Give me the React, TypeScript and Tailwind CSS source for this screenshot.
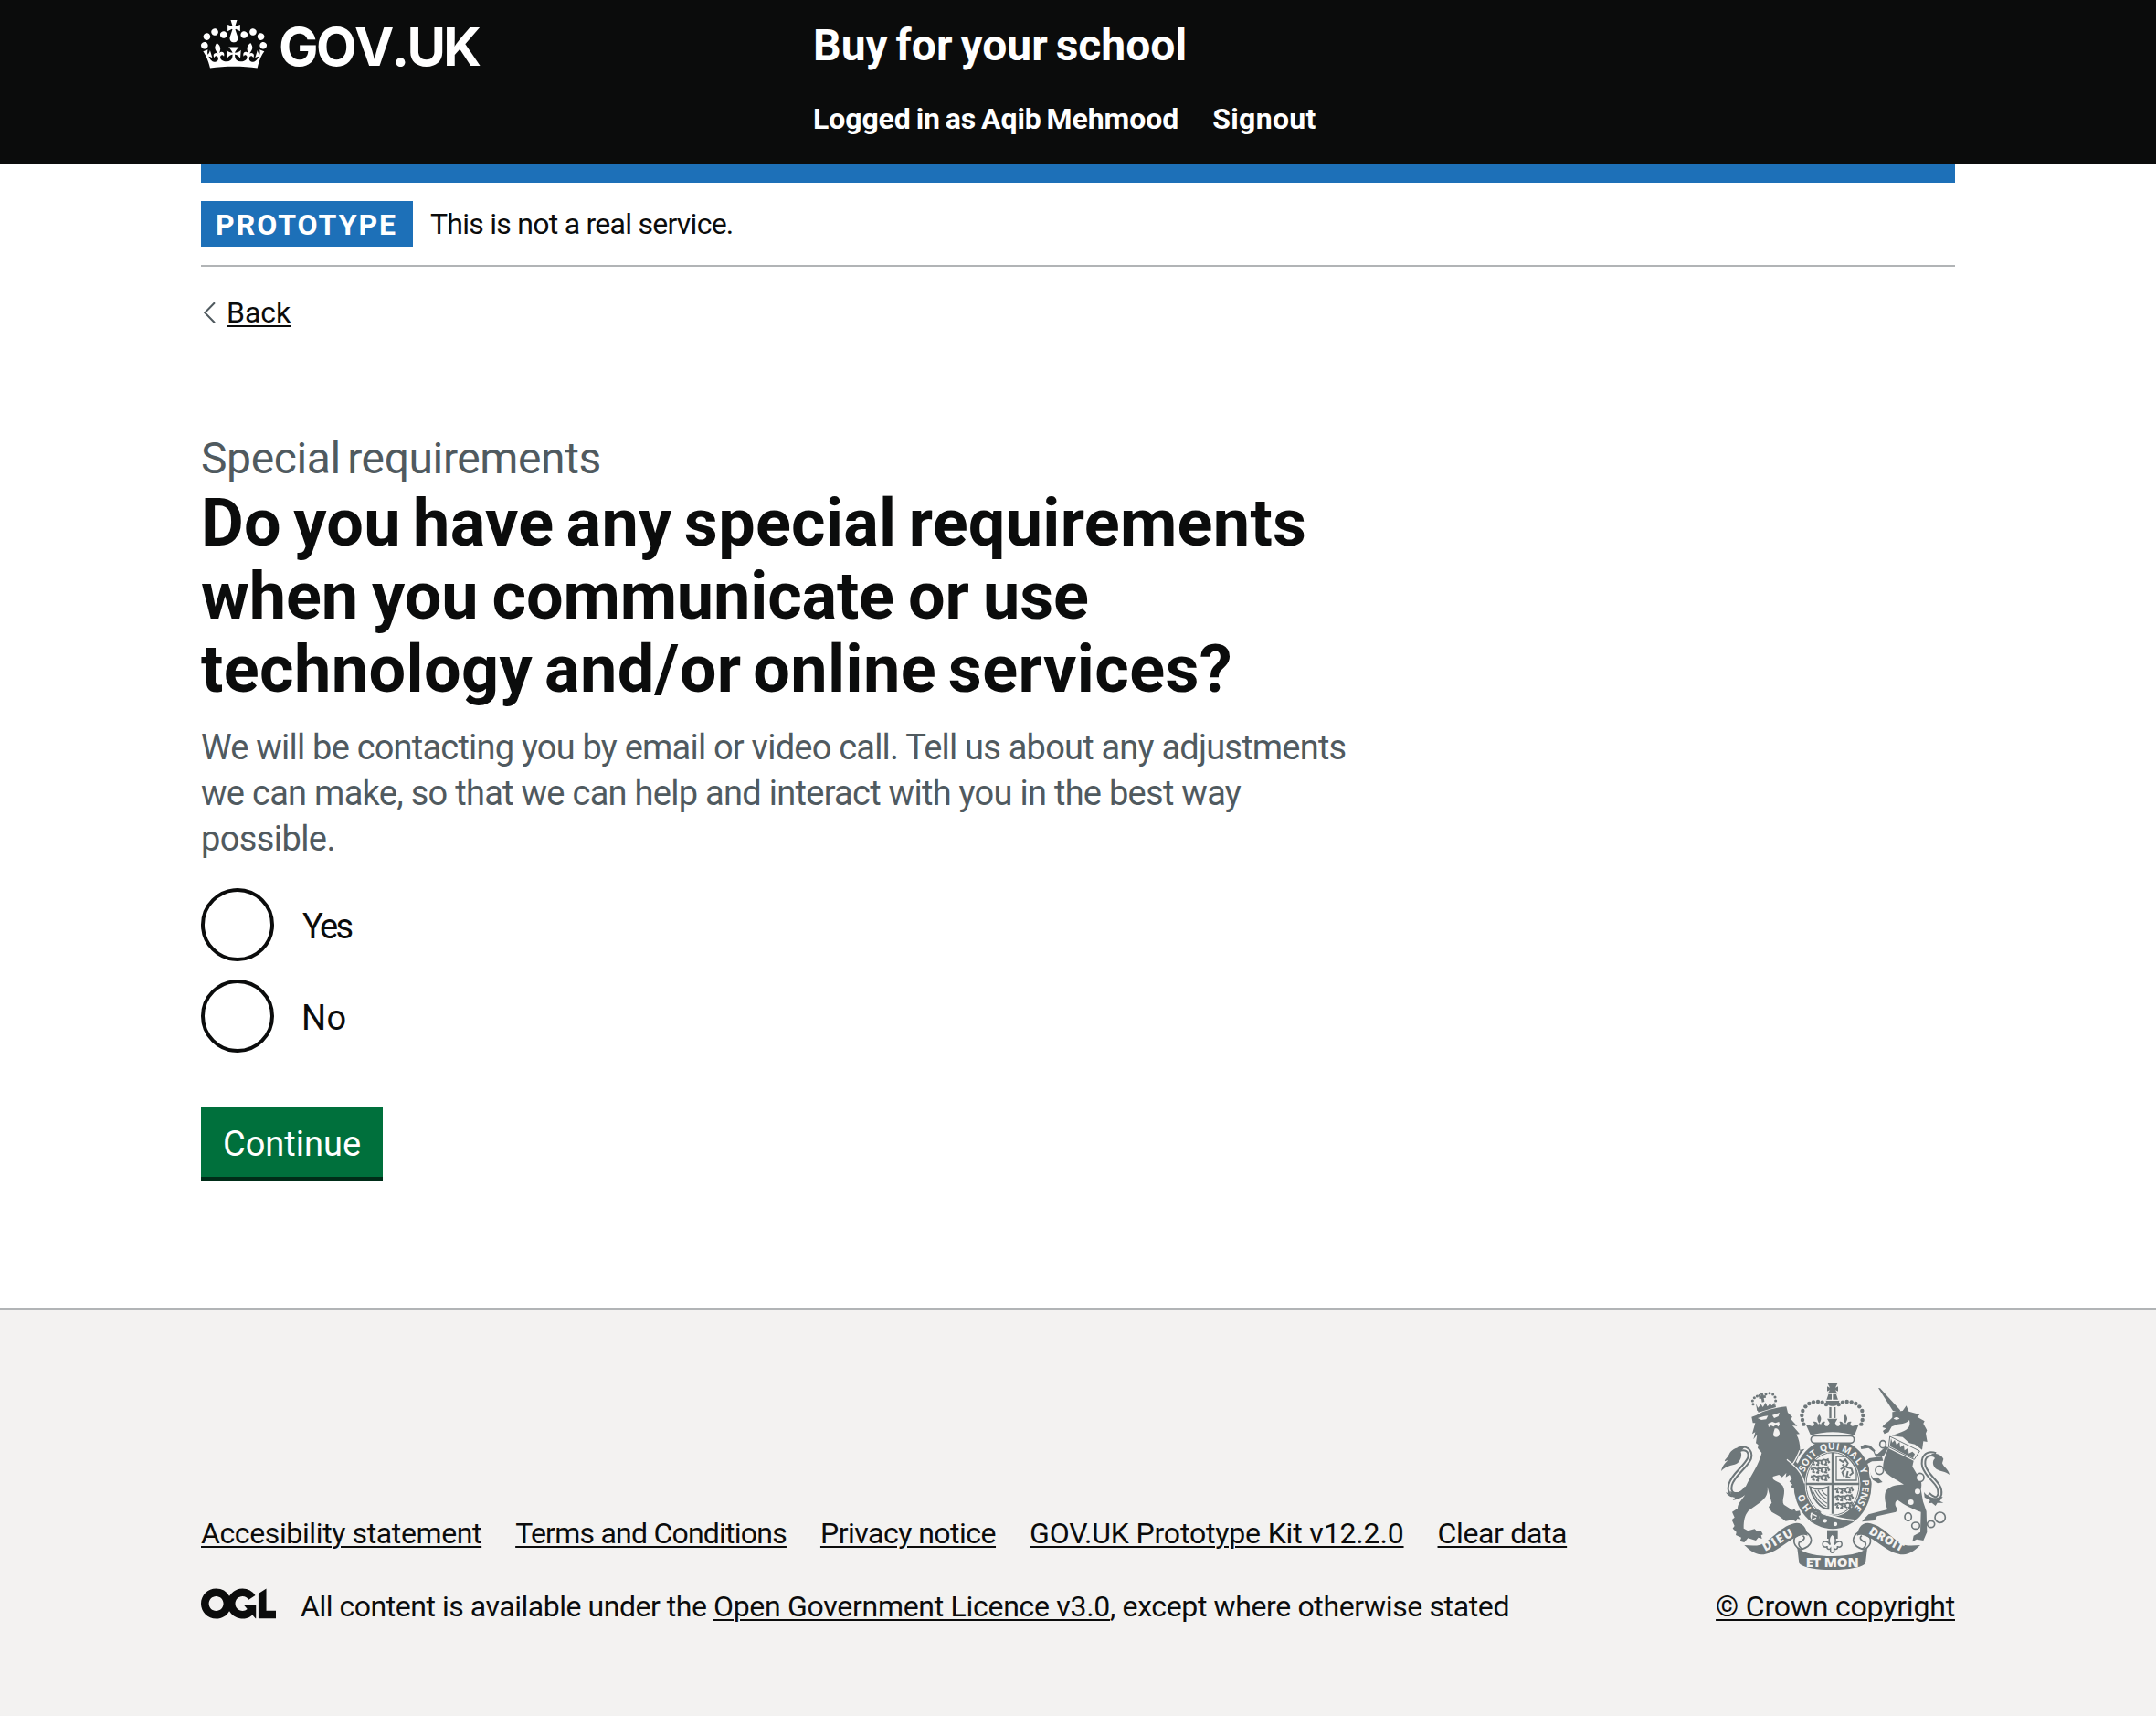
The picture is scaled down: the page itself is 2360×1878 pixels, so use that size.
import type { ReactNode } from "react";

const INK = "#6e777a";
const PAPER = "#f3f2f1";

function CrownLogo() {
  return (
    <svg viewBox="0 0 132 97" className="mt-[1.5px] h-[53px] w-[72px] shrink-0" fill="currentColor" aria-hidden="true">
      <path
        fillRule="evenodd"
        d="M25 30.2c3.5 1.5 7.7-.2 9.1-3.7 1.5-3.6-.2-7.8-3.9-9.2-3.6-1.4-7.6.3-9.1 3.9-1.4 3.5.3 7.5 3.9 9zM9 39.5c3.6 1.5 7.8-.2 9.2-3.7 1.5-3.6-.2-7.8-3.9-9.1-3.6-1.5-7.6.2-9.1 3.8-1.4 3.5.3 7.5 3.8 9zM4.4 57.2c3.5 1.5 7.7-.2 9.1-3.8 1.5-3.6-.2-7.7-3.9-9.1-3.5-1.5-7.6.3-9.1 3.8-1.4 3.5.3 7.6 3.9 9.1zm38.3-21.4c3.5 1.5 7.7-.2 9.1-3.8 1.5-3.6-.2-7.7-3.9-9.1-3.6-1.5-7.6.3-9.1 3.8-1.3 3.6.4 7.7 3.9 9.1zm64.4-5.6c-3.6 1.5-7.8-.2-9.1-3.7-1.5-3.6.2-7.8 3.8-9.2 3.6-1.4 7.7.3 9.2 3.9 1.3 3.5-.4 7.5-3.9 9zm15.9 9.3c-3.6 1.5-7.7-.2-9.1-3.7-1.5-3.6.2-7.8 3.7-9.1 3.6-1.5 7.7.2 9.2 3.8 1.5 3.5-.3 7.5-3.8 9zm4.7 17.7c-3.6 1.5-7.8-.2-9.2-3.8-1.5-3.6.2-7.7 3.9-9.1 3.6-1.5 7.7.3 9.2 3.8 1.3 3.5-.4 7.6-3.9 9.1zM89.3 35.8c-3.6 1.5-7.8-.2-9.2-3.8-1.4-3.6.2-7.7 3.9-9.1 3.6-1.5 7.7.3 9.2 3.8 1.4 3.6-.3 7.7-3.9 9.1zM69.7 17.7l8.9 4.7V9.3l-8.9 2.8c-.2-.3-.5-.6-.9-.9L72.4 0H59.6l3.5 11.2c-.3.3-.6.5-.9.9l-8.8-2.8v13.1l8.8-4.7c.3.3.6.7.9.9l-5 15.4v.1c-.2.8-.4 1.6-.4 2.4 0 4.1 3.1 7.5 7 8.1h.2c.3 0 .7.1 1 .1.4 0 .7 0 1-.1h.2c4-.6 7.1-4.1 7.1-8.1 0-.8-.1-1.7-.4-2.4V34l-5.1-15.4c.4-.2.7-.6 1-.9zM66 92.8c16.9 0 32.8 1.1 47.1 3.2 4-16.9 8.9-26.7 14-33.5l-9.6-3.4c1 4.9 1.1 7.2 0 10.2-1.5-1.4-3-4.3-4.2-8.7L108.6 76c2.8-2 5-3.2 7.5-3.3-4.4 9.4-10 11.9-13.6 11.2-4.3-.8-6.3-4.6-5.6-7.9 1-4.7 5.7-5.9 8-.5 4.3-8.7-3-11.4-7.6-8.8 7.1-7.2 7.9-13.5 2.1-21.1-8 6.1-8.1 12.3-4.5 20.8-4.7-5.4-12.1-2.5-9.5 6.2 3.4-5.2 7.9-2 7.2 3.1-.6 4.3-6.4 7.8-13.5 7.2-10.3-.9-10.9-8-11.2-13.8 2.5-.5 7.1 1.8 11 7.3L80.2 60c-4.1 4.4-8 5.3-12.3 5.4 1.4-4.4 8-11.6 8-11.6H55.5s6.4 7.2 7.9 11.6c-4.2-.1-8-1-12.3-5.4l1.4 16.4c3.9-5.5 8.5-7.7 10.9-7.3-.3 5.8-.9 12.8-11.1 13.8-7.2.6-12.9-2.9-13.5-7.2-.7-5 3.8-8.3 7.1-3.1 2.7-8.7-4.6-11.6-9.4-6.2 3.7-8.5 3.6-14.7-4.6-20.8-5.8 7.6-5 13.9 2.2 21.1-4.7-2.6-11.9.1-7.7 8.8 2.3-5.5 7.1-4.2 8.1.5.7 3.3-1.3 7.1-5.7 7.9-3.5.7-9-1.8-13.5-11.2 2.5.1 4.7 1.3 7.5 3.3l-4.7-15.4c-1.2 4.4-2.7 7.2-4.3 8.7-1.1-3-.9-5.3 0-10.2l-9.5 3.4c5 6.9 9.9 16.7 14 33.5 14.8-2.1 30.8-3.2 47.7-3.2z"
      />
    </svg>
  );
}

function OglLogo() {
  return (
    <svg viewBox="0 0 483.2 195.7" className="h-[34px] w-[82px] shrink-0 self-start" fill="currentColor" aria-hidden="true">
      <path d="M421.5 142.8V.1l-50.7 32.3v161.1h112.4v-50.7zm-122.3-9.6A47.12 47.12 0 0 1 221 97.8c0-26 21.1-47.1 47.1-47.1 16.7 0 31.4 8.7 39.7 21.8l42.7-27.2A97.63 97.63 0 0 0 268.1 0c-36.5 0-68.3 20.1-85.1 49.7A98 98 0 0 0 97.8 0C43.9 0 0 43.9 0 97.8s43.9 97.8 97.8 97.8c36.5 0 68.3-20.1 85.1-49.7a97.76 97.76 0 0 0 149.6 25.4l19.4 22.2h3v-87.8h-80l24.3 27.5zM97.8 145c-26 0-47.1-21.1-47.1-47.1s21.1-47.1 47.1-47.1 47.1 21.1 47.1 47.1S123.8 145 97.8 145" />
    </svg>
  );
}

/* Garter motto: each letter with its clock angle on the belt. */
const MOTTO: [string, number][] = [
  ["H", -129], ["O", -112],
  ["S", -66], ["O", -55], ["I", -45], ["T", -36],
  ["Q", -16], ["U", -2], ["I", 9],
  ["M", 25], ["A", 40], ["L", 53],
  ["Y", 69],
  ["P", 88], ["E", 98.5], ["N", 109], ["S", 120], ["E", 130],
];

const ARCH: [number, number][] = [
  [343, 206], [339, 192], [337, 177], [340, 162], [349, 148], [361, 138], [375, 133], [390, 132], [404, 134], [417, 141],
];

const LION_CROWN: [number, number][] = [
  [177, 140], [175, 129], [181, 119], [190, 114], [219, 107], [231, 104], [242, 108], [249, 117], [251, 129], [198, 112],
];

const PASSANT = "M0 5l8-4 6 4 8-2 9 1 7-4 8 2 8-4M6 6l-3 9 7 1M18 6l4 5-6 6 7 1M32 6l-2 6 8 5M44 5l3 5-5 6 8 1M50 2l6 6-4 3M0 1l-2 8";

function PassantLions({ x, y, s }: { x: number; y: number; s: number }) {
  return (
    <g transform={`translate(${x} ${y}) scale(${s})`} fill="none" stroke={INK} strokeWidth={5.5} strokeLinejoin="round">
      <path d={PASSANT} />
      <path d={PASSANT} transform="translate(0 25)" />
      <path d={PASSANT} transform="translate(0 50)" />
    </g>
  );
}

function RoyalArms() {
  return (
    <svg viewBox="72 72 750 612" className="h-[204px] w-[250px]" aria-hidden="true">
      <g fill={INK}>
        {/* lion tail */}
        <path d="M158 425C115 450 95 435 102 405C112 370 150 350 165 318C172 290 150 280 128 290" fill="none" stroke={INK} strokeWidth={17} />
        <path d="M158 425C115 450 95 435 102 405C112 370 150 350 165 318C172 290 150 280 128 290" fill="none" stroke={PAPER} strokeWidth={5} />
        <path d="M148 282C125 278 105 290 98 305C92 318 82 322 84 328L94 324C86 334 76 340 72 360C88 342 108 342 122 336C136 328 142 306 136 296Z" />
        <path d="M150 410C135 432 115 436 98 424L106 436L87 430C98 446 108 446 118 446L110 456C136 452 152 440 168 420Z" />
        {/* lion crown */}
        <path d="M190 156L250 141L252 150L194 167Z" />
        <path d="M186 138l7 14 10-12 6 10 9-15 6 13 8-9 7 6 9-12-3 14-55 15z" />
        <path d="M200 101l9 3 3 8 6-1 1 8-7 1 2 12-8 2-2-12-7 1-1-8 7-1z" />
        {LION_CROWN.map(([x, y]) => (
          <circle key={`${x}-${y}`} cx={x} cy={y} r={4.6} />
        ))}
        {/* lion body */}
        <path d="M172 182L188 176C215 160 250 152 286 148L291 168L306 182L300 188L322 212L306 210L330 238L319 239C328 255 331 272 331 290L346 287L326 312L318 330C340 350 348 375 342 400L352 424L340 420L336 432L326 422L318 430L312 416L300 412L306 404L296 394L304 386L297 372L284 380L286 366L272 380L262 372L242 378C236 392 262 392 274 408C288 430 268 455 278 470L306 488L312 484L318 492L330 490L333 504L326 508L332 518L322 516L318 526L306 520L284 524L262 508L238 494L228 478L238 464L224 412C228 440 212 454 198 464L162 490C150 505 146 520 146 548L160 556L182 550L190 558L204 558L209 568L203 571L206 582L194 578L186 588L160 580L148 594L134 590L138 578L120 570L122 560L110 548L116 540L107 520L116 512L108 494L126 482C128 455 166 438 152 412C170 372 196 340 205 300L192 284L194 274L186 268L190 240L178 256L184 232L174 238L184 202L176 202Z" />
        <path d="M192 186l20-6 14-2-6 12-16 2zM240 176l24-8-4 12-14 6zM226 204l14-6 10 4 12-4 2 8-4 8-8-6-8 6-8-4-8 6zM248 220c8-2 16 4 16 16 0 8-6 12-12 12-8 0-10-6-8-14z" fill={PAPER} />

        {/* unicorn tail */}
        <path d="M776 306C745 296 732 318 738 345C752 385 795 400 790 436C784 458 768 452 752 436" fill="none" stroke={INK} strokeWidth={17} />
        <path d="M776 306C745 296 732 318 738 345C752 385 795 400 790 436C784 458 768 452 752 436" fill="none" stroke={PAPER} strokeWidth={5} />
        <path d="M762 304C778 300 796 306 802 320L798 334C804 350 818 352 822 372C808 360 792 362 780 354C766 346 764 326 774 318Z" />
        <path d="M738 428C745 440 768 452 784 446L800 444L790 458L802 464L782 464L776 474L764 464L752 466L758 456L740 446Z" />
        {/* unicorn */}
        <path d="M588 87L594 88L660 160L658 168L636 162Z" />
        <path d="M634 166L668 162L680 145L688 164L724 174L716 182L740 196L736 204L748 226L744 236L749 264L736 262L732 290L708 272L690 268L668 248L632 244L664 232C690 222 694 210 690 192C680 204 668 204 652 206L632 214L622 232L608 238L603 228L614 220L602 216C602 208 626 196 634 184Z" />
        <path d="M638 188c6-8 16-6 20 0l-10 4z" fill={PAPER} />
        <path d="M626 246L724 294L706 322L622 280Z" fill={PAPER} stroke={INK} strokeWidth={3} />
        <path d="M630 252l4 14 8-8 6 16 10-10 2 18 12-8 2 18 12-8 2 18 12-6 8 8-6 14-76-40z" />
        <path d="M622 286L704 326L700 345L716 372C728 385 733 400 728 420L735 460L746 492L748 560L736 588L714 584L700 592L704 572L726 560L728 494C700 484 672 470 652 455C640 460 642 476 652 484L646 494L584 508L576 522L534 526L546 512L556 502L618 486C610 462 606 440 614 424C630 405 655 404 672 404C650 388 606 372 604 345C604 325 614 305 622 280Z" />
        <path d="M622 282L606 310L580 314L572 296L556 284L532 288L530 280L544 272L562 276L576 290L590 300L612 280Z" />
        <path d="M604 326L568 328L548 338L560 366L572 384L586 380L602 396L588 400L568 388L546 366L534 336L558 318L600 312Z" />
        <g fill={PAPER} stroke={INK} strokeWidth={5}>
          <ellipse cx={603} cy={272} rx={10} ry={12} />
          <ellipse cx={592} cy={357} rx={13} ry={14} />
          <ellipse cx={725} cy={381} rx={13} ry={14} />
          <ellipse cx={686} cy={510} rx={11} ry={13} />
          <ellipse cx={711} cy={539} rx={13} ry={11} />
          <ellipse cx={761} cy={534} rx={12} ry={11} />
          <circle cx={791} cy={512} r={17} />
        </g>
        <g fill={PAPER}>
          <circle cx={717} cy={427} r={9} />
          <circle cx={695} cy={462} r={9} />
          <circle cx={583} cy={297} r={7} />
        </g>

        {/* imperial crown */}
        <path d="M422 72h32l-7 14 9-4v16l-9-4 7 12h-32l7-12-9 4v-16l9 4z" />
        <path d="M424 108h26l6 18h-38zM416 128h44c0 12-10 18-22 18s-22-6-22-18z" />
        <path d="M437 104v24M418 127h40" stroke={PAPER} strokeWidth={4} />
        <path d="M427 150h7v36h-7zM441 150h7v36h-7z" />
        {ARCH.map(([x, y]) => (
          <g key={`${x}-${y}`}>
            <circle cx={x} cy={y} r={6.6} />
            <circle cx={875 - x} cy={y} r={6.6} />
          </g>
        ))}
        <path d="M350 206l20 6c8 0 10-8 4-14 8-2 14 2 16 8l4-2c-6-12-10-18 0-30 10 12 6 20 0 30l6 2c2-8 8-10 14-8-6 6-2 16 8 14l6-10-8-14h34l-8 14 6 10c10 2 14-8 8-14 6-2 12 0 14 8l6-2c-6-10-10-18 0-30 10 12 6 18 0 30l4 2c2-6 8-10 16-8-6 6-4 14 4 14l20-6-14 36c-46-14-98-14-144 0z" />

        {/* garter */}
        <ellipse cx={438} cy={402} rx={128} ry={148} />
        <ellipse cx={438} cy={402} rx={91} ry={107} fill={PAPER} />
        <ellipse cx={438} cy={402} rx={87} ry={103} fill="none" stroke={INK} strokeWidth={3} />
        <rect x={367} y={244} width={142} height={24} rx={12} fill={PAPER} stroke={INK} strokeWidth={5} />
        <path d="M351 402H525M438 300V500" stroke={INK} strokeWidth={7} />
        <PassantLions x={370} y={322} s={1.02} />
        <PassantLions x={449} y={414} s={1.0} />
        <path d="M450 312h32c16 10 28 26 34 46v32h-66z" fill="none" stroke={INK} strokeWidth={4} />
        <path d="M460 322l12 8 8-8 8 12-6 12 18 6 4 14-10 8M470 338l8 8-14 8M480 352l-10 12 6 14M488 360l-4 18 12 4" fill="none" stroke={INK} strokeWidth={6} />
        <path d="M364 412C382 420 404 420 424 412V484C400 484 372 452 364 412Z" fill="none" stroke={INK} strokeWidth={6} />
        <path d="M380 422C390 440 402 456 420 466M390 422C396 434 408 446 420 452M402 422C406 430 412 436 420 440M372 424C384 452 396 466 418 476" fill="none" stroke={INK} strokeWidth={3.5} />
        <path d="M400 494C430 508 470 518 508 522" fill="none" stroke={PAPER} strokeWidth={6} />
        <circle cx={380} cy={508} r={19} fill={PAPER} stroke={INK} strokeWidth={7} />
        <path d="M372 490l26 8-8 34-22-6z" />
        <path d="M366 498l20 10M366 522l18-8" stroke={PAPER} strokeWidth={4} />
        <circle cx={413} cy={523} r={6.5} fill={PAPER} />
        <circle cx={447} cy={534} r={6.5} fill={PAPER} />
        <path d="M288 322C310 340 336 360 346 400M330 292C318 320 312 335 304 338" fill="none" stroke={PAPER} strokeWidth={4} />
        <path d="M566 330C556 352 560 380 568 392" fill="none" stroke={PAPER} strokeWidth={5} />
        {MOTTO.map(([letter, angle], i) => {
          const t = (angle * Math.PI) / 180;
          const x = 438 + 109 * Math.sin(t);
          const y = 402 - 124 * Math.cos(t);
          return (
            <text
              key={i}
              transform={`translate(${x.toFixed(1)} ${y.toFixed(1)}) rotate(${angle})`}
              y={11}
              textAnchor="middle"
              fill={PAPER}
              fontFamily="Open Sans"
              fontWeight={700}
              fontSize={31}
            >
              {letter}
            </text>
          );
        })}

        {/* fleur below the garter */}
        <path d="M420 554h35v28h-35z" />
        <path d="M437 566C424 578 424 590 430 602C420 586 402 588 406 604C410 612 420 610 420 606C418 618 428 618 431 614V622A6 6 0 1 0 443 622V614C446 618 456 618 454 606C454 610 464 612 468 604C472 588 454 586 444 602C450 590 450 578 437 566Z" fill={PAPER} stroke={INK} strokeWidth={4.5} />

        {/* motto scroll */}
        {[false, true].map((flip) => (
          <g key={String(flip)} transform={flip ? "translate(874 0) scale(-1 1)" : undefined}>
            <path d="M314 578C306 596 318 612 334 618C350 612 366 606 368 588C368 576 360 566 350 560L330 568Z" fill={PAPER} stroke={INK} strokeWidth={5} />
            <path d="M340 572C352 578 340 592 328 594C324 602 330 612 340 616" fill="none" stroke={INK} strokeWidth={5} />
            <path d="M148 603C165 604 185 606 200 602C242 586 268 536 320 530C344 531 352 548 356 572C342 566 328 572 316 578C284 592 250 632 204 634C182 633 164 618 148 603Z" />
          </g>
        ))}
        <path d="M322 612C346 632 390 639 437 639C484 639 528 632 552 612L546 662C526 692 348 692 328 662Z" />
      </g>
      <g fill={PAPER} fontFamily="Open Sans" fontWeight={800} textAnchor="middle">
        <text transform="translate(264 598) rotate(-29)" fontSize={40} textLength={108}>DIEU</text>
        <text transform="translate(609 595) rotate(29)" fontSize={38} textLength={124}>DROIT</text>
        <text x={437} y={676} fontSize={44} textLength={174}>ET MON</text>
      </g>
    </svg>
  );
}

function FooterLink({ children, className }: { children: ReactNode; className: string }) {
  return (
    <a href="#" className={`underline decoration-2 underline-offset-[3px] ${className}`}>
      {children}
    </a>
  );
}

function RadioOption({ label, labelClass }: { label: string; labelClass: string }) {
  return (
    <label className="flex h-20 items-center">
      <span className="size-20 shrink-0 rounded-full border-4 border-[#0b0c0c]" />
      <span className={`pt-[3px] text-[38px] leading-[50px] ${labelClass}`}>{label}</span>
    </label>
  );
}

export default function App() {
  return (
    <div className="flex h-[1878px] w-[2360px] flex-col overflow-hidden bg-white font-[Roboto,sans-serif] text-[#0b0c0c]">
      <header className="h-[180px] shrink-0 bg-[#0b0c0c] text-white">
        <div className="mx-auto flex w-[1920px] pt-5">
          <a href="#" className="flex w-[670px] items-start gap-[13px]">
            <CrownLogo />
            <span className="pt-px font-[Inter] text-[58px] leading-[60px] font-bold tracking-[-2.6px] [font-kerning:none]">GOV.UK</span>
          </a>
          <div className="font-bold">
            <div className="text-[48px] leading-[60px] [word-spacing:-3px]">Buy for your school</div>
            <nav className="mt-[30px] flex gap-[37px] text-[32px] leading-10">
              <a href="#" className="tracking-[-0.08px] [word-spacing:-2px]">Logged in as Aqib Mehmood</a>
              <a href="#" className="tracking-[0.35px]">Signout</a>
            </nav>
          </div>
        </div>
      </header>

      <div className="mx-auto w-[1920px]">
        <div className="h-5 bg-[#1d70b8]" />
        <div className="flex h-[92px] gap-[19px] border-b-2 border-[#b1b4b6] pt-5">
          <strong className="h-[50px] w-[232px] bg-[#1d70b8] pl-4 text-[32px] leading-[52px] font-bold tracking-[2px] text-white">PROTOTYPE</strong>
          <span className="text-[32px] leading-[50px] tracking-[-0.74px]">This is not a real service.</span>
        </div>
        <a href="#" className="mt-[30px] flex w-fit items-start">
          <svg viewBox="0 0 28 40" className="h-10 w-7" fill="none" aria-hidden="true">
            <path d="M15 9.2L4.3 20.2l10.7 11" stroke="#505a5f" strokeWidth="2" />
          </svg>
          <span className="text-[32px] leading-10 underline decoration-2 underline-offset-[3px]">Back</span>
        </a>
      </div>

      <main className="mx-auto mt-[110px] w-[1920px]">
        <div className="text-[48px] leading-[60px] tracking-[-0.4px] text-[#505a5f] [word-spacing:-4px]">Special requirements</div>
        <h1 className="pt-px text-[72px] leading-20 font-bold">
          <span className="block tracking-[0.3px] [word-spacing:-5px]">Do you have any special requirements</span>
          <span className="block tracking-[-0.15px] [word-spacing:-2.5px]">when you communicate or use</span>
          <span className="block tracking-[0.4px] [word-spacing:-5.5px]">technology and/or online services?</span>
        </h1>
        <p className="mt-5 text-[38px] leading-[50px] text-[#505a5f]">
          <span className="block tracking-[-0.79px]">We will be contacting you by email or video call. Tell us about any adjustments</span>
          <span className="block tracking-[-0.72px]">we can make, so that we can help and interact with you in the best way</span>
          <span className="block tracking-[-0.6px]">possible.</span>
        </p>
        <div className="mt-[29px] flex flex-col gap-5">
          <RadioOption label="Yes" labelClass="pl-[31px] tracking-[-2.6px]" />
          <RadioOption label="No" labelClass="pl-[30px] tracking-[0.5px]" />
        </div>
        <button type="button" className="mt-[60px] block h-20 w-[199px] border-b-4 border-[#002d18] bg-[#00703c] pt-0.5 text-center text-[38px] leading-[76px] text-white">
          Continue
        </button>
      </main>

      <footer className="mt-auto h-[446px] shrink-0 border-t-2 border-[#b1b4b6] bg-[#f3f2f1] text-[32px] leading-10">
        <div className="mx-auto flex h-[344px] w-[1920px] items-end justify-between">
          <div className="flex flex-col gap-10">
            <nav className="flex gap-[37px]">
              <FooterLink className="tracking-[-0.38px]">Accesibility statement</FooterLink>
              <FooterLink className="tracking-[-0.77px]">Terms and Conditions</FooterLink>
              <FooterLink className="tracking-[-0.51px]">Privacy notice</FooterLink>
              <FooterLink className="tracking-[-0.16px]">GOV.UK Prototype Kit v12.2.0</FooterLink>
              <FooterLink className="tracking-[-0.35px]">Clear data</FooterLink>
            </nav>
            <div className="flex gap-[27px]">
              <OglLogo />
              <span className="tracking-[-0.47px]">
                All content is available under the{" "}
                <FooterLink className="tracking-[-0.29px]">Open Government Licence v3.0</FooterLink>
                <span className="tracking-[-0.37px]">, except where otherwise stated</span>
              </span>
            </div>
          </div>
          <div className="flex flex-col items-center gap-5">
            <RoyalArms />
            <FooterLink className="tracking-[-0.18px]">© Crown copyright</FooterLink>
          </div>
        </div>
      </footer>
    </div>
  );
}
